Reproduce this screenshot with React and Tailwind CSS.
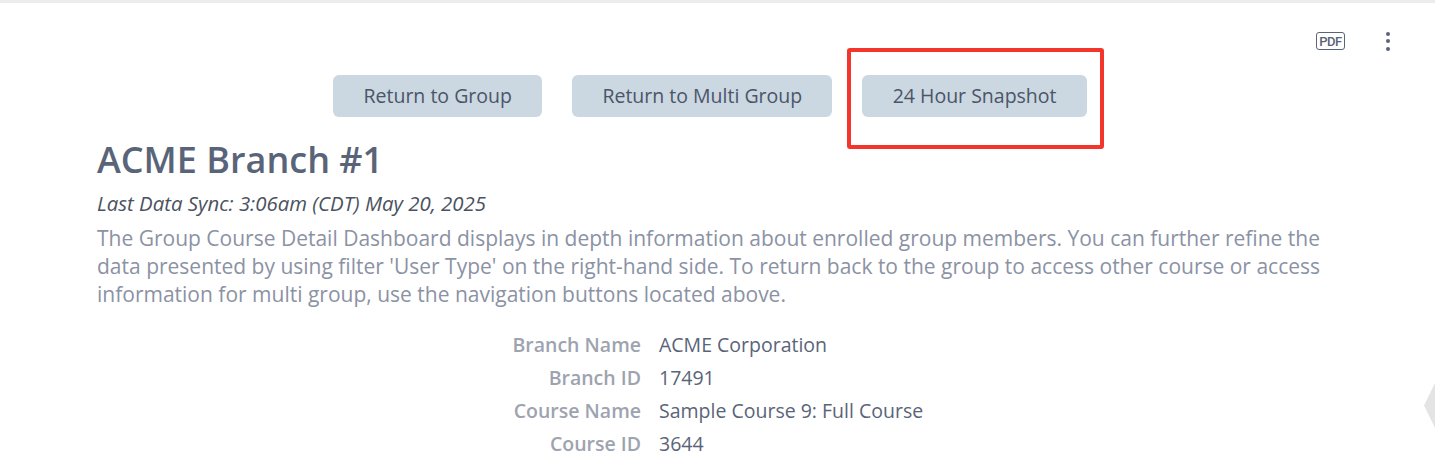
const details = [
  ["Branch Name", "ACME Corporation"],
  ["Branch ID", "17491"],
  ["Course Name", "Sample Course 9: Full Course"],
  ["Course ID", "3644"],
];

const buttons = ["Return to Group", "Return to Multi Group", "24 Hour Snapshot"];

function PdfIcon() {
  return (
    <div className="flex h-[18px] w-[29px] items-center justify-center rounded-[3px] border-[1.5px] border-[#5a6478] font-['Roboto',sans-serif] text-[13px] font-medium leading-none tracking-[-0.4px] text-[#5a6478]">
      PDF
    </div>
  );
}

function MoreIcon() {
  return (
    <div className="flex flex-col gap-[3.5px]">
      <span className="h-[4px] w-[4px] rounded-full bg-[#5a6478]" />
      <span className="h-[4px] w-[4px] rounded-full bg-[#5a6478]" />
      <span className="h-[4px] w-[4px] rounded-full bg-[#5a6478]" />
    </div>
  );
}

export default function App() {
  return (
    <div className="relative h-[474px] w-[1435px] overflow-hidden bg-white font-['Open_Sans',sans-serif]">
      <div className="h-[3px] bg-[#ececec]" />

      <div className="flex h-[72px] items-center justify-end gap-[41px] pr-[45px] pt-[4px]">
        <PdfIcon />
        <MoreIcon />
      </div>

      <div className="flex w-[1420px] justify-center gap-[30px]">
        {buttons.map((label) => (
          <button
            key={label}
            className="h-[42px] rounded-[6px] bg-[#cbd7e1] px-[30.25px] text-[19.5px] text-[#4a5568]"
          >
            {label}
          </button>
        ))}
      </div>

      <div className="pl-[97px] pr-[110px]">
        <h1 className="mt-[20px] text-[36px] font-semibold leading-[46px] text-[#5a6478]">
          ACME Branch #1
        </h1>
        <p className="mt-[6px] text-[20.4px] italic leading-[28px] text-[#4a5260]">
          Last Data Sync: 3:06am (CDT) May 20, 2025
        </p>
        <p className="mt-[7px] text-[21px] leading-[28px] text-[#8b92a4]">
          The Group Course Detail Dashboard displays in depth information about enrolled group members. You can further refine the data presented by using filter 'User Type' on the right-hand side. To return back to the group to access other course or access information for multi group, use the navigation buttons located above.
        </p>
      </div>

      <div className="mt-[20px] flex flex-col">
        {details.map(([label, value]) => (
          <div key={label} className="flex h-[33px] items-center gap-[18px] text-[19.5px]">
            <span className="w-[641px] text-right font-semibold text-[#9ea3b0]">{label}</span>
            <span className="text-[#5a6478]">{value}</span>
          </div>
        ))}
      </div>

      {/* annotation box on top of the screenshot */}
      <div className="absolute left-[847px] top-[48px] h-[101px] w-[257px] rounded-[3px] border-[4px] border-[#f4352c]" />

      {/* partly hidden side arrow */}
      <div className="absolute left-[1424px] top-[383px] h-[45px] w-[11px] bg-[#e4e4e4] [clip-path:polygon(100%_0,100%_100%,0_50%)]" />
    </div>
  );
}
